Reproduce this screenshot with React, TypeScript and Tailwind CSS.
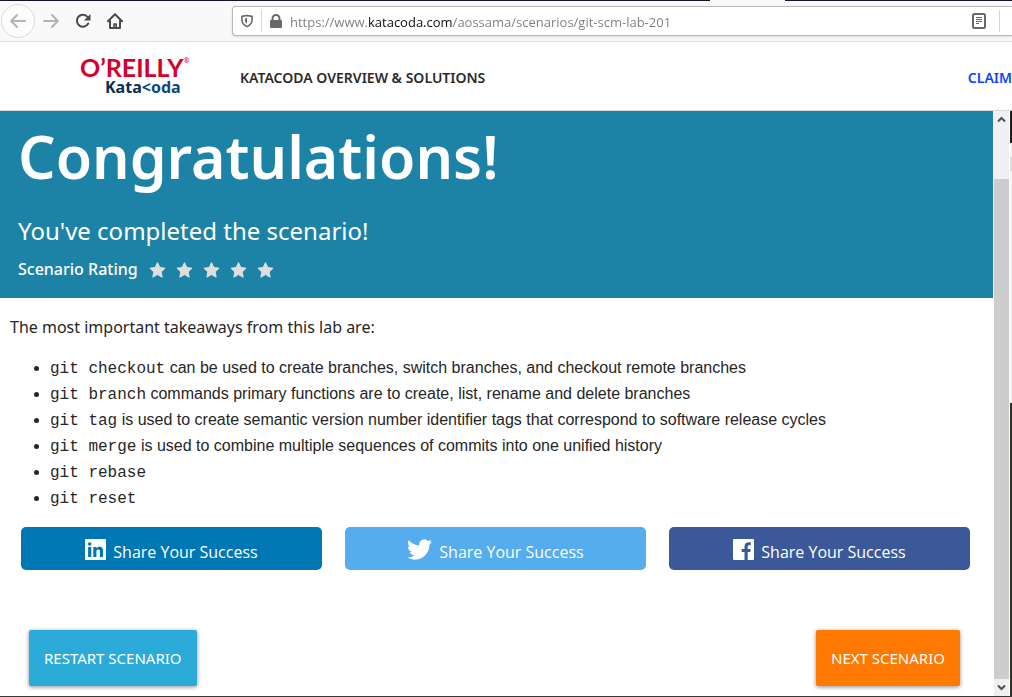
import React, { useState } from "react";

const takeaways = [
  { command: "git checkout", text: "can be used to create branches, switch branches, and checkout remote branches" },
  { command: "git branch", text: "commands primary functions are to create, list, rename and delete branches" },
  { command: "git tag", text: "is used to create semantic version number identifier tags that correspond to software release cycles" },
  { command: "git merge", text: "is used to combine multiple sequences of commits into one unified history" },
  { command: "git rebase", text: "" },
  { command: "git reset", text: "" },
];

function BrowserBar() {
  const [url, setUrl] = useState("https://www.katacoda.com/aossama/scenarios/git-scm-lab-201");
  return (
    <div className="border-b border-[#dcdcdf] bg-[#f9f9fa]">
      <div className="flex h-px bg-[#15132b]">
        <div className="ml-[710px] w-[75px] bg-[#f9f9fa]" />
      </div>
      <div className="flex h-10 items-center">
        <button aria-label="Back" className="ml-px flex size-[34px] shrink-0 items-center justify-center rounded-full border border-[#dcdcdc] bg-[#fcfcfc]">
          <svg width="16" height="16" viewBox="0 0 16 16" fill="none" stroke="#b3b3b3" strokeWidth="2" strokeLinecap="round" strokeLinejoin="round">
            <path d="M15 8H1.5M7 2 1.2 8 7 14" />
          </svg>
        </button>
        <button aria-label="Forward" className="ml-2 shrink-0">
          <svg width="16" height="16" viewBox="0 0 16 16" fill="none" stroke="#b3b3b3" strokeWidth="2" strokeLinecap="round" strokeLinejoin="round">
            <path d="M1 8h13.5M9 2l5.8 6L9 14" />
          </svg>
        </button>
        <button aria-label="Reload" className="ml-4 shrink-0">
          <svg width="16" height="16" viewBox="0 0 16 16" fill="none" stroke="#4a4a4f" strokeWidth="2">
            <path d="M13.2 10.5A6 6 0 1 1 12.6 4" strokeLinecap="round" />
            <path d="M15.5 1v6.5H9z" fill="#4a4a4f" stroke="none" />
          </svg>
        </button>
        <button aria-label="Home" className="ml-4 shrink-0">
          <svg width="16" height="16" viewBox="0 0 16 16" fill="none" stroke="#4a4a4f" strokeWidth="2" strokeLinecap="round" strokeLinejoin="round">
            <path d="M1 8.2 8 1.2l7 7M3 8v7h10V8" />
            <path d="M7 15v-4h2.2v4" strokeWidth="1.6" />
          </svg>
        </button>
        <div className="ml-[109px] flex h-[30px] min-w-0 flex-1 items-center rounded-l-sm border border-r-0 border-[#b8b8b8] bg-white shadow-sm">
          <svg className="ml-2 shrink-0" width="12" height="14" viewBox="0 0 13 14" fill="none" stroke="#68686b" strokeWidth="1.7" strokeLinejoin="round">
            <path d="M1 2 6.5 1 12 2v3.500c0 4-2.300 6.300-5.500 7.600C3.300 11.800 1 9.500 1 5.500z" />
            <path d="M6.500 3.800v6.200C4.900 8.900 4.200 7.500 4.200 5.600V4.200z" fill="#68686b" stroke="none" />
          </svg>
          <div className="ml-2 h-[22px] w-px shrink-0 bg-[#d7d7db]" />
          <svg className="ml-2 shrink-0" width="12" height="14" viewBox="0 0 12 14" fill="#68686b">
            <path d="M2.500 6V4.500a3.500 3.500 0 0 1 7 0V6" fill="none" stroke="#68686b" strokeWidth="2" />
            <rect y="6" width="12" height="8" rx="1.200" />
          </svg>
          <input
            aria-label="Address"
            value={url}
            onChange={(e) => setUrl(e.target.value)}
            className="ml-2 h-6 min-w-0 flex-1 bg-[linear-gradient(90deg,#7c7c7f_78px,#0c0c0d_78px,#0c0c0d_162px,#7c7c7f_162px)] bg-clip-text pt-0.5 font-['Open_Sans',sans-serif] text-[13px] text-transparent outline-none"
          />
          <button aria-label="Reader view" className="mx-[13px] shrink-0">
            <svg width="14" height="16" viewBox="0 0 14 16" fill="none" stroke="#68686b">
              <rect x="1" y="1" width="12" height="14" rx="1.500" strokeWidth="2" />
              <path d="M4 4.500h6M4 6.500h6M4 8.500h6M4 10.500h3" />
            </svg>
          </button>
          <div className="mr-3 h-[22px] w-px shrink-0 bg-[#d7d7db]" />
        </div>
      </div>
    </div>
  );
}

function Header() {
  return (
    <header className="flex h-[69px] items-center overflow-hidden border-b border-[#d8d8d8] bg-[#fefefe] font-['Noto_Sans',sans-serif]">
      <a href="#home" aria-label="O'Reilly Katacoda" className="ml-20 w-[111px] shrink-0">
        <span className="flex text-[#d3002d]">
          <span className="font-['Lato',sans-serif] text-[25px] leading-[20px] font-bold">O’REILLY</span>
          <span className="text-[7px] leading-[8px]">®</span>
        </span>
        <span className="ml-[25px] block pt-px text-base leading-[18px] font-bold text-[#0b4a80]">
          <span className="text-[#0a2f50]">Kata</span>&lt;oda
        </span>
      </a>
      <a href="#overview" className="ml-[49px] shrink-0 pt-1 text-sm font-semibold text-[#2b2b2b]">KATACODA OVERVIEW &amp; SOLUTIONS</a>
      <a href="#claim" className="ml-auto shrink-0 pt-1 text-sm font-semibold text-[#0a46ff]">CLAIM</a>
    </header>
  );
}

function Star() {
  return (
    <svg width="17" height="16" viewBox="0 0 17 16" fill="#dedede" stroke="#dedede" strokeLinejoin="round">
      <path d="M8.500.600l2.300 4.900 5.300.700-3.900 3.700 1 5.300-4.700-2.600-4.700 2.600 1-5.300L.900 6.200l5.300-.700z" />
    </svg>
  );
}

function Banner() {
  return (
    <section className="bg-[#1d83a6] px-[18px] pb-[13px] font-['Noto_Sans',sans-serif] text-white">
      <h1 className="pt-0.5 text-[59px] leading-[86px] font-semibold">Congratulations!</h1>
      <h2 className="pt-3 text-2xl leading-10">You've completed the scenario!</h2>
      <div className="flex h-[34px] items-center gap-[11px] pt-0.5">
        <span className="text-base font-medium">Scenario Rating</span>
        <div className="flex gap-[10px] pt-0.5">
          {[1, 2, 3, 4, 5].map((n) => (
            <button key={n} aria-label={"Rate " + n}><Star /></button>
          ))}
        </div>
      </div>
    </section>
  );
}

function LinkedInIcon() {
  return (
    <svg width="21" height="21" viewBox="0 0 21 21">
      <rect width="21" height="21" rx="1" fill="#fff" />
      <g fill="#0077b5">
        <circle cx="4.700" cy="5" r="1.800" />
        <path d="M3.100 8h3.200v10H3.100zM8.300 8h3v1.400c.6-1 1.700-1.700 3.100-1.700 3 0 3.700 2 3.700 4.700V18h-3.200v-5c0-1.300-.1-2.600-1.700-2.600s-1.800 1.200-1.800 2.500V18H8.300z" />
      </g>
    </svg>
  );
}

function TwitterIcon() {
  return (
    <svg width="25" height="21" viewBox="0 2 24 20" fill="#fff">
      <path d="M23.950 4.570a10 10 0 0 1-2.820.770 4.960 4.960 0 0 0 2.160-2.720c-.950.550-2 .950-3.130 1.180a4.920 4.920 0 0 0-8.380 4.480C7.690 8.090 4.070 6.130 1.640 3.160a4.820 4.820 0 0 0-.670 2.480c0 1.710.870 3.210 2.190 4.100a4.900 4.900 0 0 1-2.230-.620v.060a4.920 4.920 0 0 0 3.950 4.830 5 5 0 0 1-2.210.080 4.940 4.940 0 0 0 4.600 3.420A9.870 9.870 0 0 1 0 19.540a13.990 13.990 0 0 0 7.550 2.210c9.050 0 14-7.500 14-13.980 0-.210 0-.420-.020-.630a9.940 9.940 0 0 0 2.460-2.550z" />
    </svg>
  );
}

function FacebookIcon() {
  return (
    <svg width="21" height="21" viewBox="0 0 21 21">
      <rect width="21" height="21" rx="1" fill="#fff" />
      <path d="M11.500 21v-8H8.700V9.900h2.800V7.500c0-2.800 1.700-4.300 4.200-4.300.9 0 1.600 0 2.100.100V6.200h-1.500c-1.300 0-1.600.7-1.600 1.600v2.100h3l-.4 3.100h-2.600v8z" fill="#3b5998" />
    </svg>
  );
}

const shares = [
  { name: "LinkedIn", color: "bg-[#0077b5]", icon: <LinkedInIcon /> },
  { name: "Twitter", color: "bg-[#55acee]", icon: <TwitterIcon /> },
  { name: "Facebook", color: "bg-[#3b5998]", icon: <FacebookIcon /> },
];

function Scrollbar() {
  return (
    <div className="flex w-[17px] shrink-0 flex-col border-x border-white bg-[#f0f0f0]" aria-hidden="true">
      <div className="flex h-[17px] items-center justify-center">
        <svg width="9" height="7" viewBox="0 0 9 7" fill="none" stroke="#505050" strokeWidth="2"><path d="M1 5.500 4.500 2 8 5.500" /></svg>
      </div>
      <div className="mt-[51px] flex-1 bg-[#cdcdcd]" />
      <div className="flex h-[17px] items-center justify-center">
        <svg width="9" height="7" viewBox="0 0 9 7" fill="none" stroke="#505050" strokeWidth="2"><path d="M1 1.500 4.500 5 8 1.500" /></svg>
      </div>
    </div>
  );
}

export default function App() {
  return (
    <div className="flex min-h-screen flex-col overflow-hidden border-b border-[#393a30] bg-white">
      <BrowserBar />
      <Header />
      <div className="flex flex-1">
        <main className="flex min-w-0 flex-1 flex-col text-[#262626]">
          <Banner />
          <section className="px-[10px] pt-4">
            <p className="font-['Noto_Sans',sans-serif] text-base leading-[26px]">The most important takeaways from this lab are:</p>
            <ul className="mt-[15px] list-disc pl-10 font-['Liberation_Sans',sans-serif] text-base leading-[26px]">
              {takeaways.map((item) => (
                <li key={item.command}>
                  <code className="font-['Liberation_Mono',monospace] text-base">{item.command}</code> {item.text}
                </li>
              ))}
            </ul>
          </section>
          <div className="mt-4 grid grid-cols-3 gap-[23px] pr-[23px] pl-[21px] font-['Open_Sans',sans-serif]">
            {shares.map((share) => (
              <button key={share.name} aria-label={"Share Your Success on " + share.name} className={"flex h-[43px] items-center justify-center gap-[7px] rounded-[5px] pt-0.5 text-base text-white " + share.color}>
                {share.icon}
                <span className="pt-1">Share Your Success</span>
              </button>
            ))}
          </div>
          <div className="mt-auto flex justify-between pr-[33px] pb-[10px] pl-[29px] font-['Noto_Sans',sans-serif] text-[15px] text-white">
            <button className="h-14 rounded-xs bg-[#2cabd8] px-[15px] shadow-[0_1px_4px_rgba(0,0,0,0.45)]">RESTART SCENARIO</button>
            <button className="h-14 rounded-xs bg-[#ff7800] px-[15px] shadow-[0_1px_4px_rgba(0,0,0,0.45)]">NEXT SCENARIO</button>
          </div>
        </main>
        <Scrollbar />
        <div className="flex w-[2px] shrink-0 flex-col bg-[#f4f4f4]">
          <div className="h-8 bg-[#1e1e1e]" />
          <div className="mt-[14px] h-[14px] bg-[#dedede]" />
          <div className="mt-auto h-[293px] bg-[#2f3029]" />
        </div>
      </div>
    </div>
  );
}
